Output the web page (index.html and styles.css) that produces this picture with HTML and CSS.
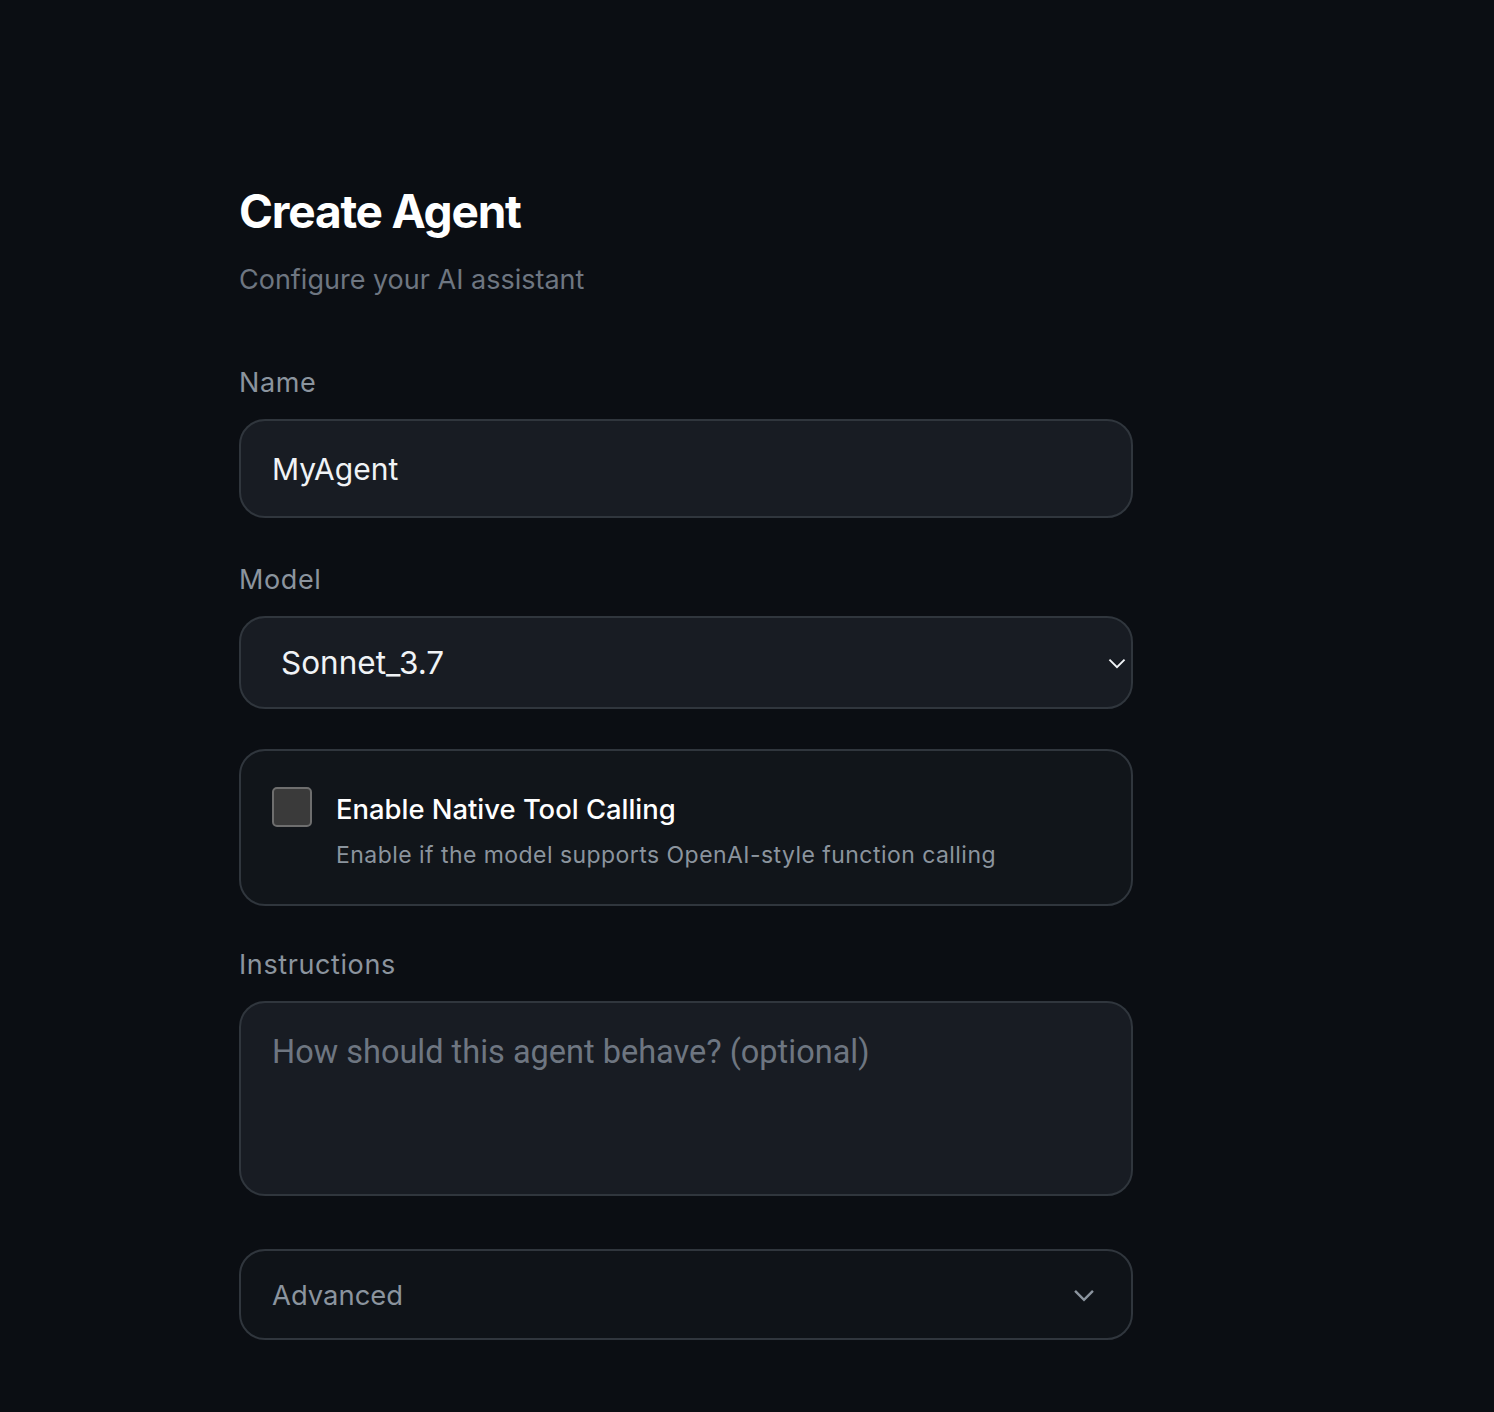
FILE: index.html
```html
<!DOCTYPE html>
<html lang="en">
<head>
    <meta charset="UTF-8">
    <title>Create Agent</title>
    <link rel="stylesheet" href="styles.css">
</head>
<body>

<div id="container">
    <h1>Create Agent</h1>
    <p class="subtitle">Configure your AI assistant</p>

    <form>
        <div class="field">
            <label for="name">Name</label>
            <input type="text" id="name" class="text-input" value="MyAgent">
        </div>

        <div class="field">
            <label for="model">Model</label>
            <div class="select-wrap">
                <select id="model" class="select-input">
                    <option>Sonnet_3.7</option>
                </select>
                <svg class="select-chevron" viewBox="0 0 16 16" width="22" height="22">
                    <path d="M2.5 5.5 8 11l5.5-5.5" fill="none" stroke="#f0f3f6" stroke-width="1.4"/>
                </svg>
            </div>
        </div>

        <div class="tool-card">
            <span class="checkbox"></span>
            <div class="tool-text">
                <div class="tool-title">Enable Native Tool Calling</div>
                <div class="tool-desc">Enable if the model supports OpenAI-style function calling</div>
            </div>
        </div>

        <div class="field">
            <label for="instructions">Instructions</label>
            <textarea id="instructions" class="text-area" placeholder="How should this agent behave? (optional)"></textarea>
        </div>

        <div class="advanced">
            <span>Advanced</span>
            <svg viewBox="0 0 16 16" width="26" height="26">
                <path d="M2.5 5.5 8 11l5.5-5.5" fill="none" stroke="#8b949e" stroke-width="1.5"/>
            </svg>
        </div>
    </form>
</div>

</body>
</html>
```

FILE: styles.css
```css
body {
    margin: 0;
    background-color: #0b0e13;
    font-family: Inter, "Noto Sans", sans-serif;
    color: #f0f3f6;
    min-height: 100vh;
}

#container {
    width: 894px;
    padding: 184px 0 60px 239px;
}

h1 {
    margin: 0;
    font-size: 46px;
    font-weight: 700;
    letter-spacing: -1.2px;
    line-height: 1.2;
    color: #ffffff;
}

.subtitle {
    margin: 23px 0 0;
    font-size: 27px;
    line-height: 1.3;
    color: #6e7681;
}

form {
    margin-top: 68px;
}

.field + .field {
    margin-top: 44px;
}

label {
    display: block;
    font-size: 27px;
    line-height: 1.3;
    letter-spacing: 0.6px;
    color: #8b949e;
    margin-bottom: 19px;
}

.text-input {
    display: block;
    width: 100%;
    height: 99px;
    box-sizing: border-box;
    padding: 0 31px;
    background-color: #181c23;
    border: 2px solid #30363d;
    border-radius: 26px;
    color: #f0f3f6;
    font-family: Inter, sans-serif;
    font-size: 30px;
    outline: none;
}

.select-wrap {
    position: relative;
}

.select-input {
    display: block;
    width: 100%;
    height: 93px;
    box-sizing: border-box;
    padding: 0 40px;
    background-color: #181c23;
    border: 2px solid #30363d;
    border-radius: 26px;
    color: #f0f3f6;
    font-family: Inter, sans-serif;
    font-size: 31.5px;
    appearance: none;
    outline: none;
}

.select-chevron {
    position: absolute;
    right: 5px;
    top: 50%;
    transform: translateY(-50%);
}

.tool-card {
    display: flex;
    gap: 24px;
    margin-top: 40px;
    padding: 36px 31px 33px;
    background-color: #11151a;
    border: 2px solid #30363d;
    border-radius: 26px;
}

.tool-card + .field {
    margin-top: 41px;
}

.checkbox {
    flex: none;
    width: 36px;
    height: 36px;
    border: 2px solid #6e6e6e;
    border-radius: 5px;
    background-color: #3a3a3a;
}

.tool-title {
    font-size: 27.4px;
    font-weight: 500;
    line-height: 1.3;
    color: #ffffff;
    margin-top: 5px;
}

.tool-desc {
    font-size: 23px;
    line-height: 1.3;
    letter-spacing: 0.45px;
    color: #8b949e;
    margin-top: 13px;
}

.text-area {
    display: block;
    width: 100%;
    height: 195px;
    box-sizing: border-box;
    padding: 30px 31px;
    background-color: #181c23;
    border: 2px solid #30363d;
    border-radius: 26px;
    color: #f0f3f6;
    font-family: Roboto, sans-serif;
    font-size: 32.5px;
    resize: none;
    outline: none;
}

.text-area::placeholder {
    color: #6e7681;
}

.advanced {
    display: flex;
    justify-content: space-between;
    align-items: center;
    height: 91px;
    box-sizing: border-box;
    margin-top: 53px;
    padding: 0 34px 0 31px;
    background-color: #0f1318;
    border: 2px solid #30363d;
    border-radius: 26px;
    font-size: 27.4px;
    color: #8b949e;
}
```
